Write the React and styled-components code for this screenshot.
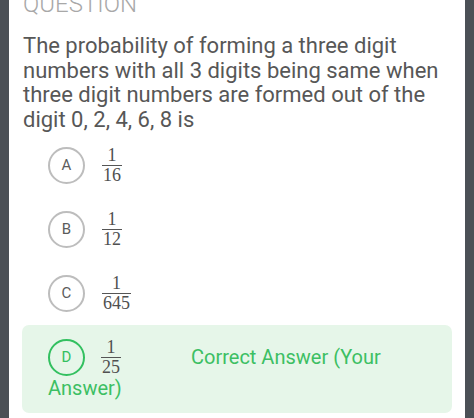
import React from "react";
import styled, { createGlobalStyle } from "styled-components";

const GlobalStyle = createGlobalStyle`
  html, body { margin: 0; padding: 0; background: #4b5056; }
  body { font-family: Roboto, "Noto Sans", Arial, sans-serif; }
  * { box-sizing: border-box; }
`;

const Page = styled.div`
  margin: 0 9px;
  height: 418px;
  overflow: hidden;
  background: #ffffff;
  padding: 0 13px;
`;

const Heading = styled.div`
  margin-top: -8px;
  font-size: 24px;
  line-height: 24px;
  font-weight: 300;
  color: #a8a8a8;
  padding-left: 1px;
`;

const Question = styled.p`
  margin: 18px 0 1px;
  font-size: 22px;
  line-height: 24.6px;
  color: #575757;
  padding-left: 1px;
`;

const Option = styled.div`
  display: ${(p) => (p.$flow ? "block" : "flex")};
  align-items: center;
  gap: 17px;
  padding: ${(p) => (p.$flow ? "13px 26px 12px" : "13px 26px 13px")};
  border-radius: 7px;
  background: ${(p) => (p.$correct ? "#e6f6e9" : "transparent")};
  color: ${(p) => (p.$correct ? "#3cbf63" : "#575757")};
`;

const Badge = styled.span`
  display: inline-flex;
  align-items: center;
  justify-content: center;
  width: 37px;
  height: 37px;
  border-radius: 50%;
  border: 2px solid ${(p) => (p.$correct ? "#33c060" : "#bdbdbd")};
  color: ${(p) => (p.$correct ? "#33c060" : "#5c5c5c")};
  font-size: 15px;
  flex-shrink: 0;
  vertical-align: middle;
`;

const Fraction = styled.span`
  display: inline-flex;
  flex-direction: column;
  align-items: center;
  font-family: "Liberation Serif", "DejaVu Serif", serif;
  font-size: 18px;
  line-height: 1;
  color: #505050;
  vertical-align: middle;
  margin-left: ${(p) => (p.$inline ? "16px" : "0")};
`;

const Num = styled.span`
  padding: 0 1px;
`;

const Bar = styled.span`
  align-self: stretch;
  height: 1px;
  margin: 1px 0 0;
  background: #555555;
`;

const Verdict = styled.span`
  margin-left: 70px;
  font-size: 20px;
  line-height: 25px;
  vertical-align: middle;
`;

const options = [
  { letter: "A", den: "16" },
  { letter: "B", den: "12" },
  { letter: "C", den: "645" },
];

function Frac({ num, den, inline }) {
  return (
    <Fraction $inline={inline}>
      <Num>{num}</Num>
      <Bar />
      <Num>{den}</Num>
    </Fraction>
  );
}

export default function App() {
  return (
    <>
      <GlobalStyle />
      <Page>
        <Heading>QUESTION</Heading>
        <Question>
          The probability of forming a three digit numbers with all 3 digits
          being same when three digit numbers are formed out of the digit 0, 2,
          4, 6, 8 is
        </Question>
        {options.map((o) => (
          <Option key={o.letter}>
            <Badge>{o.letter}</Badge>
            <Frac num="1" den={o.den} />
          </Option>
        ))}
        <Option $correct $flow>
          <Badge $correct>D</Badge>
          <Frac num="1" den="25" inline />
          <Verdict>Correct Answer (Your Answer)</Verdict>
        </Option>
      </Page>
    </>
  );
}
